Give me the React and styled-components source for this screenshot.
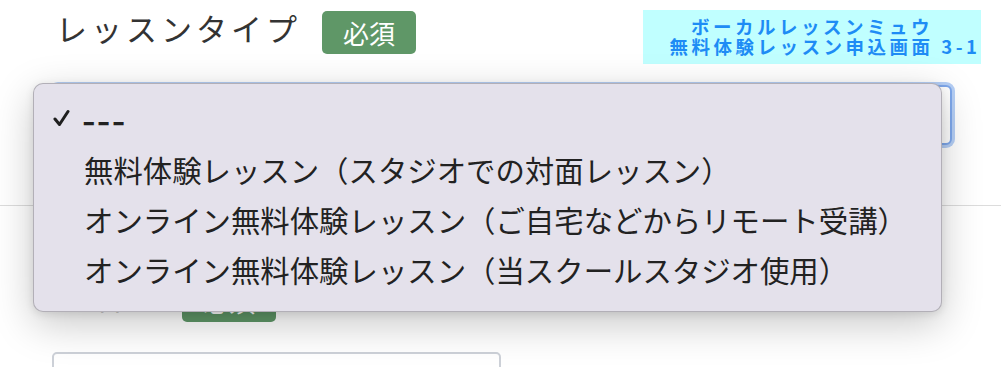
import React from "react";
import styled, { createGlobalStyle } from "styled-components";

const GlobalStyle = createGlobalStyle`
  html, body {
    margin: 0;
    padding: 0;
    background: #fff;
    overflow: hidden;
  }
  body {
    font-family: "Noto Sans CJK JP", "Noto Sans", sans-serif;
    color: #333;
  }
`;

const Page = styled.div`
  width: 1001px;
  height: 367px;
  padding-top: 10px;
  box-sizing: border-box;
  overflow: hidden;
`;

const Section = styled.div`
  padding: 0 0 0 52px;
`;

const Header = styled.div`
  display: flex;
  align-items: flex-start;
  padding-right: 20px;
`;

const Label = styled.div`
  margin: 0 0 0 4px;
  font-size: 31px;
  line-height: 36px;
  letter-spacing: 4px;
  color: #333;
`;

const Badge = styled.span`
  margin-left: 21px;
  margin-top: 1px;
  height: 43px;
  padding: 0 21px;
  display: inline-flex;
  align-items: center;
  border-radius: 5px;
  background: #5f9767;
  color: #fff;
  font-size: 26px;
`;

const TitleBox = styled.div`
  margin-left: auto;
  width: 338px;
  height: 54px;
  padding-top: 7px;
  box-sizing: border-box;
  background: #c0ffff;
  color: #1e8cf5;
  font-weight: 700;
  font-size: 18.5px;
  line-height: 19.5px;
  letter-spacing: 3.5px;
  text-align: center;
`;

const TitleLine = styled.div`
  padding-left: ${(p) => p.$shift || 0}px;
  white-space: nowrap;
`;

const SelectWrap = styled.div`
  position: relative;
  margin-top: 21px;
  width: 900px;
  height: 60px;
`;

const SelectBox = styled.div`
  height: 100%;
  box-sizing: border-box;
  border: 2px solid #7ea8ec;
  border-radius: 6px;
  box-shadow: 0 0 0 3px #b5cff6;
  background: #fff;
  display: flex;
  align-items: center;
  justify-content: flex-end;
  padding-right: 8px;
`;

const Popup = styled.ul`
  position: absolute;
  left: -19px;
  top: -2px;
  width: 909px;
  margin: 0;
  padding: 10px 0 17px;
  list-style: none;
  box-sizing: border-box;
  background: #e4e1eb;
  border: 1px solid rgba(0, 0, 0, 0.22);
  border-radius: 10px;
  box-shadow: 0 12px 40px rgba(0, 0, 0, 0.22), 0 2px 8px rgba(0, 0, 0, 0.1);
  z-index: 2;
`;

const Option = styled.li`
  position: relative;
  height: 50px;
  display: flex;
  align-items: center;
  padding-left: 50px;
  font-size: 29.4px;
  color: #222;
  white-space: nowrap;
`;

const Dashes = styled.span`
  margin-left: -2px;
  font-weight: 700;
  letter-spacing: 1px;
  transform: scaleX(1.25);
  transform-origin: left center;
`;

const Check = styled.svg`
  position: absolute;
  left: 19px;
  top: 15px;
`;

const Divider = styled.div`
  margin-top: 60px;
  height: 1px;
  background: #dcdcdc;
`;

const Section2 = styled(Section)`
  padding-top: 72px;
`;

const Input = styled.div`
  margin-top: 30px;
  width: 449px;
  height: 50px;
  box-sizing: border-box;
  border: 2px solid #cdd1d8;
  border-radius: 5px;
  background: #fff;
`;

const options = [
  "無料体験レッスン（スタジオでの対面レッスン）",
  "オンライン無料体験レッスン（ご自宅などからリモート受講）",
  "オンライン無料体験レッスン（当スクールスタジオ使用）",
];

export default function App() {
  return (
    <Page>
      <GlobalStyle />
      <Section>
        <Header>
          <Label>レッスンタイプ</Label>
          <Badge>必須</Badge>
          <TitleBox>
            <TitleLine>ボーカルレッスンミュウ</TitleLine>
            <TitleLine $shift={26}>無料体験レッスン申込画面 3-1</TitleLine>
          </TitleBox>
        </Header>
        <SelectWrap>
          <SelectBox>
            <svg width="12" height="8" viewBox="0 0 12 8">
              <path d="M1 1.5 L6 6.5 L11 1.5" fill="none" stroke="#444" strokeWidth="2" />
            </svg>
          </SelectBox>
          <Popup>
            <Option>
              <Check width="17" height="18" viewBox="0 0 17 18">
                <path d="M2 10 L6.5 15.5 L15 2.5" fill="none" stroke="#1f1f1f" strokeWidth="3" strokeLinecap="round" strokeLinejoin="round" />
              </Check>
              <Dashes>---</Dashes>
            </Option>
            {options.map((o) => (
              <Option key={o}>{o}</Option>
            ))}
          </Popup>
        </SelectWrap>
      </Section>
      <Divider />
      <Section2>
        <Header>
          <Label>お名前</Label>
          <Badge>必須</Badge>
        </Header>
        <Input />
      </Section2>
    </Page>
  );
}
